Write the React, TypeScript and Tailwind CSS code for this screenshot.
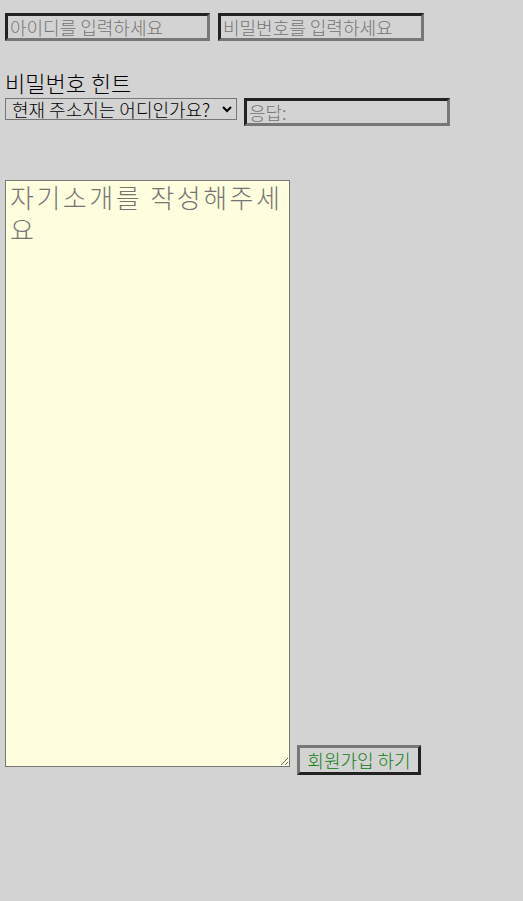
import React from "react";

const font = { fontFamily: '"Noto Sans CJK KR", "Noto Sans", sans-serif' };

export default function App() {
  return (
    <div
      className="min-h-[901px] w-full bg-[#d3d3d3] pl-[5px] pt-[13px] font-light text-black"
      style={font}
    >
      <div className="flex gap-[8px]">
        <input
          placeholder="아이디를 입력하세요"
          className="h-[28px] w-[205px] border-[3px] border-t-[#222] border-l-[#222] border-r-[#777] border-b-[#777] bg-transparent px-[2px] text-[18px] font-light leading-none placeholder:text-[#757575] outline-none"
        />
        <input
          placeholder="비밀번호를 입력하세요"
          className="h-[28px] w-[206px] border-[3px] border-t-[#222] border-l-[#222] border-r-[#777] border-b-[#777] bg-transparent px-[2px] text-[18px] font-light leading-none placeholder:text-[#757575] outline-none"
        />
      </div>

      <div className="mt-[27px] text-[22px] font-light leading-[28px]">비밀번호 힌트</div>

      <div className="mt-[2px] flex items-start gap-[7px]">
        <div className="relative flex h-[22px] w-[232px] items-center border border-[#767676] pl-[6px] text-[18px] font-light leading-none">
          <span>현재 주소지는 어디인가요?</span>
          <svg
            className="absolute right-[4px] top-[6px]"
            width="10"
            height="8"
            viewBox="0 0 10 8"
          >
            <path d="M1 2 L5 6 L9 2" stroke="#000" strokeWidth="2" fill="none" />
          </svg>
        </div>
        <input
          placeholder="응답:"
          className="h-[28px] w-[206px] border-[3px] border-t-[#222] border-l-[#222] border-r-[#777] border-b-[#777] bg-transparent px-[2px] text-[18px] font-light leading-none placeholder:text-[#757575] outline-none"
        />
      </div>

      <div className="mt-[54px] flex items-end gap-[7px]">
        <textarea
          placeholder="자기소개를 작성해주세요"
          className="h-[587px] w-[285px] resize border border-[#767676] bg-[#ffffe0] px-[4px] py-0 text-[26px] font-light leading-[32px] tracking-[2.5px] placeholder:text-[#757575] outline-none"
        />
        <button className="mb-[-8px] h-[30px] w-[124px] border-[3px] border-t-[#777] border-l-[#777] border-r-[#222] border-b-[#222] bg-transparent text-[18px] font-light leading-none text-[#108010]">
          회원가입 하기
        </button>
      </div>
    </div>
  );
}
